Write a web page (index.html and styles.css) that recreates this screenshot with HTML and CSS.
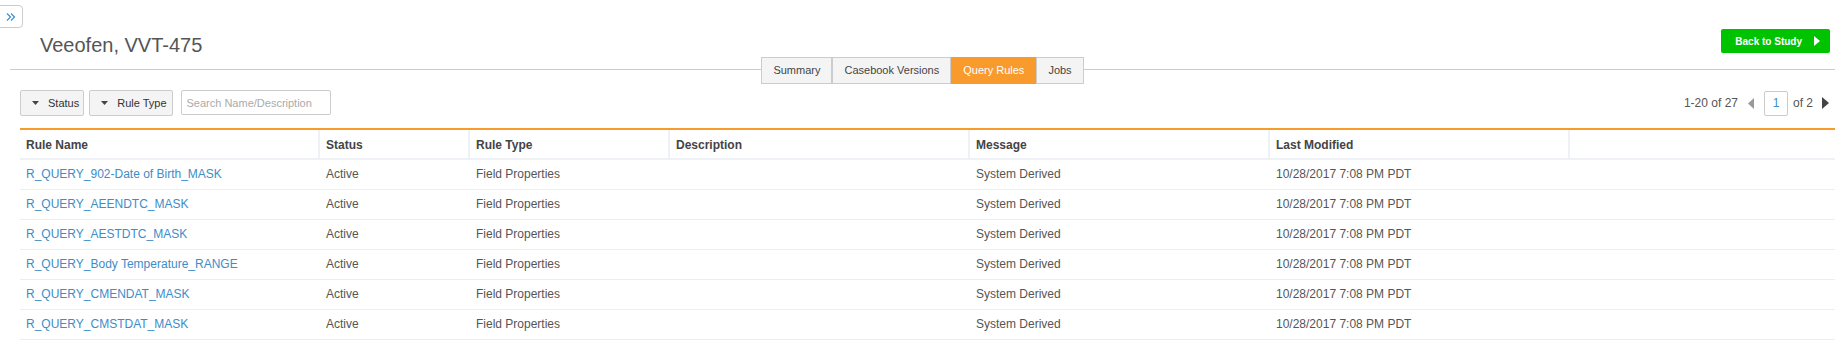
FILE: index.html
```html
<!DOCTYPE html>
<html lang="en">
<head>
    <meta charset="UTF-8">
    <meta name="viewport" content="width=device-width, initial-scale=1.0">
    <title>Query Rules</title>
    <link rel="stylesheet" href="styles.css">
</head>
<body>
    <button class="side-toggle" title="Expand">
        <svg width="10" height="10" viewBox="0 0 10 10"><path d="M1 1.5l3.5 3.5-3.5 3.5M5 1.5l3.5 3.5-3.5 3.5" fill="none" stroke="#3a8fd0" stroke-width="1.2"/></svg>
    </button>

    <div class="page-head">
        <h1 class="study-title">Veeofen, VVT-475</h1>
        <a class="btn-back" href="#">Back to Study
            <svg width="6" height="10" viewBox="0 0 6 10"><path d="M0 0l6 5-6 5z" fill="#fff"/></svg>
        </a>
    </div>

    <div class="tabbar">
        <div class="tabs">
            <a class="tab" href="#">Summary</a>
            <a class="tab" href="#">Casebook Versions</a>
            <a class="tab active" href="#">Query Rules</a>
            <a class="tab" href="#">Jobs</a>
        </div>
    </div>

    <div class="toolbar">
        <div class="filters">
            <button class="filter-btn">
                <svg class="caret" width="7" height="4" viewBox="0 0 7 4"><path d="M0 0h7L3.5 4z" fill="#444"/></svg>Status
            </button>
            <button class="filter-btn">
                <svg class="caret" width="7" height="4" viewBox="0 0 7 4"><path d="M0 0h7L3.5 4z" fill="#444"/></svg>Rule Type
            </button>
            <input class="search" type="text" placeholder="Search Name/Description">
        </div>
        <div class="pager">
            <span>1-20 of 27</span>
            <svg class="prev" width="6" height="11" viewBox="0 0 6 11"><path d="M6 0v11L0 5.5z" fill="#999"/></svg>
            <span class="page-box">1</span>
            <span class="page-of">of 2</span>
            <svg class="next" width="7" height="12" viewBox="0 0 7 12"><path d="M0 0l7 6-7 6z" fill="#444"/></svg>
        </div>
    </div>

    <table class="rules">
        <colgroup>
            <col style="width: 300px">
            <col style="width: 150px">
            <col style="width: 200px">
            <col style="width: 300px">
            <col style="width: 300px">
            <col style="width: 300px">
            <col>
        </colgroup>
        <thead>
            <tr>
                <th>Rule Name</th>
                <th>Status</th>
                <th>Rule Type</th>
                <th>Description</th>
                <th>Message</th>
                <th>Last Modified</th>
                <th></th>
            </tr>
        </thead>
        <tbody>
            <tr>
                <td><a href="#">R_QUERY_902-Date of Birth_MASK</a></td>
                <td>Active</td>
                <td>Field Properties</td>
                <td></td>
                <td>System Derived</td>
                <td>10/28/2017 7:08 PM PDT</td>
                <td></td>
            </tr>
            <tr>
                <td><a href="#">R_QUERY_AEENDTC_MASK</a></td>
                <td>Active</td>
                <td>Field Properties</td>
                <td></td>
                <td>System Derived</td>
                <td>10/28/2017 7:08 PM PDT</td>
                <td></td>
            </tr>
            <tr>
                <td><a href="#">R_QUERY_AESTDTC_MASK</a></td>
                <td>Active</td>
                <td>Field Properties</td>
                <td></td>
                <td>System Derived</td>
                <td>10/28/2017 7:08 PM PDT</td>
                <td></td>
            </tr>
            <tr>
                <td><a href="#">R_QUERY_Body Temperature_RANGE</a></td>
                <td>Active</td>
                <td>Field Properties</td>
                <td></td>
                <td>System Derived</td>
                <td>10/28/2017 7:08 PM PDT</td>
                <td></td>
            </tr>
            <tr>
                <td><a href="#">R_QUERY_CMENDAT_MASK</a></td>
                <td>Active</td>
                <td>Field Properties</td>
                <td></td>
                <td>System Derived</td>
                <td>10/28/2017 7:08 PM PDT</td>
                <td></td>
            </tr>
            <tr>
                <td><a href="#">R_QUERY_CMSTDAT_MASK</a></td>
                <td>Active</td>
                <td>Field Properties</td>
                <td></td>
                <td>System Derived</td>
                <td>10/28/2017 7:08 PM PDT</td>
                <td></td>
            </tr>
        </tbody>
    </table>
</body>
</html>
```

FILE: styles.css
```css
* {
    margin: 0;
    padding: 0;
    box-sizing: border-box;
}

body {
    font-family: "Liberation Sans", Arial, sans-serif;
    font-size: 12px;
    color: #555;
    background-color: #fff;
    overflow: hidden;
}

a {
    text-decoration: none;
}

.side-toggle {
    position: absolute;
    top: 5px;
    left: -1px;
    width: 24px;
    height: 23px;
    border: 1px solid #ccc;
    border-radius: 0 4px 4px 0;
    background-color: #fff;
    display: flex;
    align-items: center;
    justify-content: center;
}

.page-head {
    display: flex;
    justify-content: space-between;
    align-items: flex-start;
    height: 57px;
    padding: 0 15px 0 40px;
}

.study-title {
    margin-top: 33px;
    font-size: 20px;
    font-weight: normal;
    line-height: 24px;
    color: #555;
}

.btn-back {
    margin-top: 29px;
    height: 24px;
    display: flex;
    align-items: center;
    gap: 12px;
    padding: 0 10px 0 14px;
    background-color: #00c300;
    color: #fff;
    font-size: 10px;
    font-weight: bold;
    border-radius: 2px;
}

.tabbar {
    display: flex;
    align-items: flex-start;
    margin: 0 10px;
}

.tabbar::before,
.tabbar::after {
    content: "";
    flex: 1;
    margin-top: 12px;
    border-top: 1px solid #ccc;
}

.tabs {
    display: flex;
}

.tab {
    height: 27px;
    line-height: 25px;
    padding: 0 11px;
    border: 1px solid #ccc;
    background-color: #f4f4f4;
    font-size: 11px;
    color: #444;
}

.tab.active {
    background-color: #f89a2c;
    border-color: #f89a2c;
    color: #fff;
}

.toolbar {
    display: flex;
    justify-content: space-between;
    align-items: center;
    height: 26px;
    margin: 6px 16px 0 20px;
}

.filters {
    display: flex;
    gap: 5px;
}

.filter-btn {
    height: 26px;
    display: flex;
    align-items: center;
    padding: 0 4px 0 11px;
    border: 1px solid #ccc;
    border-radius: 2px;
    background-color: #f4f4f4;
    font-family: inherit;
    font-size: 11px;
    color: #333;
}

.filter-btn + .filter-btn {
    padding-right: 5px;
}

.caret {
    margin-right: 9px;
}

.search {
    width: 150px;
    height: 25px;
    margin-left: 3px;
    padding: 0 5px;
    border: 1px solid #ccc;
    border-radius: 2px;
    font-family: inherit;
    font-size: 11px;
    color: #333;
}

.search::placeholder {
    color: #aaa;
}

.pager {
    display: flex;
    align-items: center;
    font-size: 12px;
    color: #555;
}

.prev {
    margin-left: 10px;
}

.page-box {
    width: 24px;
    height: 25px;
    margin-left: 10px;
    display: flex;
    align-items: center;
    justify-content: center;
    border: 1px solid #ccc;
    border-radius: 2px;
    color: #3a8fd0;
}

.page-of {
    margin-left: 5px;
}

.next {
    margin-left: 9px;
}

.rules {
    width: calc(100% - 30px);
    margin: 12px 10px 0 20px;
    border-collapse: separate;
    border-spacing: 0;
    table-layout: fixed;
    border-top: 2px solid #f89a2c;
}

.rules th {
    padding: 8px 6px 5px;
    line-height: 15px;
    text-align: left;
    font-weight: bold;
    color: #444;
    border-right: 2px solid #eef2f6;
    border-bottom: 2px solid #eef2f6;
}

.rules th:last-child {
    border-right: none;
}

.rules td {
    padding: 7px 6px;
    line-height: 15px;
    color: #555;
    border-bottom: 1px solid #eee;
    white-space: nowrap;
}

.rules td a {
    color: #3c8dc8;
}
```
